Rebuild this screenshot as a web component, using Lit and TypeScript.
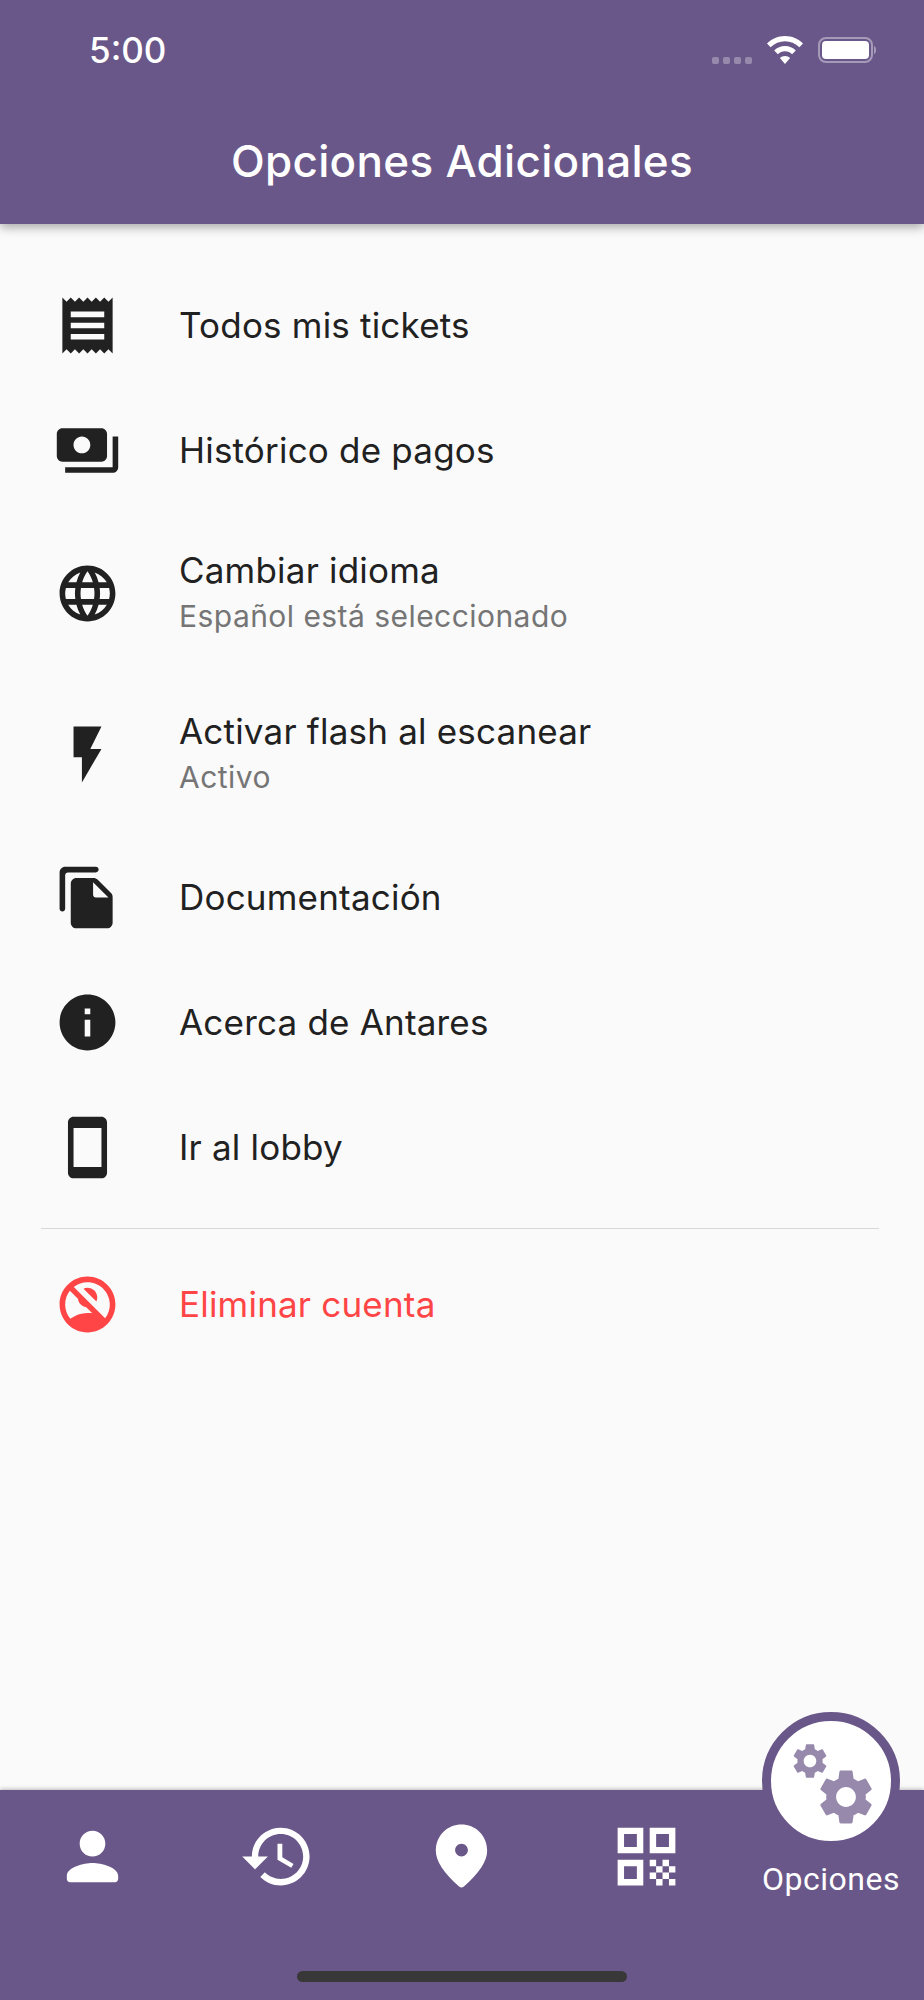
import { LitElement, css, html, svg } from 'lit';
import { customElement } from 'lit/decorators.js';

const ICONS = {
  receipt: 'M18 17H6v-2h12v2zm0-4H6v-2h12v2zm0-4H6V7h12v2zM3 22l1.5-1.5L6 22l1.5-1.5L9 22l1.5-1.5L12 22l1.5-1.5L15 22l1.5-1.5L18 22l1.5-1.5L21 22V2l-1.5 1.5L18 2l-1.5 1.5L15 2l-1.5 1.5L12 2l-1.5 1.5L9 2 7.5 3.5 6 2 4.5 3.5 3 2v20z',
  payments: 'M19 14V6c0-1.1-.9-2-2-2H3c-1.1 0-2 .9-2 2v8c0 1.1.9 2 2 2h14c1.1 0 2-.9 2-2zm-9-1c-1.66 0-3-1.34-3-3s1.34-3 3-3 3 1.34 3 3-1.34 3-3 3zm13-6v11c0 1.1-.9 2-2 2H4v-2h17V7h2z',
  language: 'M11.99 2C6.47 2 2 6.48 2 12s4.47 10 9.99 10C17.52 22 22 17.52 22 12S17.52 2 11.99 2zm6.93 6h-2.95c-.32-1.25-.78-2.45-1.38-3.56 1.84.63 3.37 1.91 4.33 3.56zM12 4.04c.83 1.2 1.48 2.53 1.91 3.96h-3.82c.43-1.43 1.08-2.76 1.91-3.96zM4.26 14C4.1 13.36 4 12.69 4 12s.1-1.36.26-2h3.38c-.08.66-.14 1.32-.14 2 0 .68.06 1.34.14 2H4.26zm.82 2h2.95c.32 1.25.78 2.45 1.38 3.56-1.84-.63-3.37-1.9-4.33-3.56zm2.95-8H5.08c.96-1.66 2.49-2.93 4.33-3.56C8.81 5.55 8.35 6.75 8.03 8zM12 19.96c-.83-1.2-1.48-2.53-1.91-3.96h3.82c-.43 1.43-1.08 2.76-1.91 3.96zM14.34 14H9.66c-.09-.66-.16-1.32-.16-2 0-.68.07-1.35.16-2h4.68c.09.65.16 1.32.16 2 0 .68-.07 1.34-.16 2zm.25 5.56c.6-1.11 1.06-2.31 1.38-3.56h2.95c-.96 1.65-2.49 2.93-4.33 3.56zM16.36 14c.08-.66.14-1.32.14-2 0-.68-.06-1.34-.14-2h3.38c.16.64.26 1.31.26 2s-.1 1.36-.26 2h-3.38z',
  flash: 'M7 2v11h3v9l7-12h-4l4-8z',
  file: 'M15 1H4c-1.1 0-2 .9-2 2v13c0 .55.45 1 1 1s1-.45 1-1V4c0-.55.45-1 1-1h10c.55 0 1-.45 1-1s-.45-1-1-1zm.59 4.59 4.83 4.83c.37.37.58.88.58 1.41V21c0 1.1-.9 2-2 2H7.99C6.89 23 6 22.1 6 21l.01-14c0-1.1.89-2 1.99-2h6.17c.53 0 1.04.21 1.42.59zM15 12h4.5L14 6.5V11c0 .55.45 1 1 1z',
  info: 'M12 2C6.48 2 2 6.48 2 12s4.48 10 10 10 10-4.48 10-10S17.52 2 12 2zm1 15h-2v-6h2v6zm0-8h-2V7h2v2z',
  phone: 'M17 1.01 7 1c-1.1 0-2 .9-2 2v18c0 1.1.9 2 2 2h10c1.1 0 2-.9 2-2V3c0-1.1-.9-1.99-2-1.99zM17 19H7V5h10v14z',
  noAccount: 'M15.18 10.94c.2-.44.32-.92.32-1.44C15.5 7.57 13.93 6 12 6c-.52 0-1 .12-1.44.32l4.62 4.62zM12 2C6.48 2 2 6.48 2 12s4.48 10 10 10 10-4.48 10-10S17.52 2 12 2zM4 12c0-1.85.63-3.55 1.69-4.9l2.86 2.86c.21 1.56 1.43 2.79 2.99 2.99l2.2 2.2C14.17 15.05 13.1 15 12 15c-2.32 0-4.45.8-6.14 2.12C4.7 15.73 4 13.95 4 12zm14.31 4.9L7.1 5.69C8.45 4.63 10.15 4 12 4c4.42 0 8 3.58 8 8 0 1.85-.63 3.54-1.69 4.9z',
  person: 'M12 12c2.21 0 4-1.79 4-4s-1.79-4-4-4-4 1.79-4 4 1.79 4 4 4zm0 2c-2.67 0-8 1.34-8 4v1c0 .55.45 1 1 1h14c.55 0 1-.45 1-1v-1c0-2.66-5.33-4-8-4z',
  history: 'M13 3c-4.97 0-9 4.03-9 9H1l3.89 3.89.07.14L9 12H6c0-3.87 3.13-7 7-7s7 3.13 7 7-3.13 7-7 7c-1.93 0-3.68-.79-4.94-2.06l-1.42 1.42C8.27 19.99 10.51 21 13 21c4.97 0 9-4.03 9-9s-4.03-9-9-9zm-1 5v5l4.28 2.54.72-1.21-3.5-2.08V8H12z',
  place: 'M12 2c-4.2 0-8 3.22-8 8.2 0 3.18 2.45 6.92 7.34 11.23.38.33.95.33 1.33 0C17.55 17.12 20 13.38 20 10.2 20 5.22 16.2 2 12 2zm0 10c-1.1 0-2-.9-2-2s.9-2 2-2 2 .9 2 2-.9 2-2 2z',
  qr: 'M3 11h8V3H3v8zm2-6h4v4H5V5zM3 21h8v-8H3v8zm2-6h4v4H5v-4zM13 3v8h8V3h-8zm6 6h-4V5h4v4zM21 19h-2v2h2v-2zM15 13h-2v2h2v-2zM17 15h-2v2h2v-2zM15 17h-2v2h2v-2zM17 19h-2v2h2v-2zM19 17h-2v2h2v-2zM19 13h-2v2h2v-2zM21 15h-2v2h2v-2z',
  gear: 'M19.14 12.94c.04-.3.06-.61.06-.94 0-.32-.02-.64-.07-.94l2.03-1.58c.18-.14.23-.41.12-.61l-1.92-3.32c-.12-.22-.37-.29-.59-.22l-2.39.96c-.5-.38-1.03-.7-1.62-.94l-.36-2.54c-.04-.24-.24-.41-.48-.41h-3.84c-.24 0-.43.17-.47.41l-.36 2.54c-.59.24-1.13.57-1.62.94l-2.39-.96c-.22-.08-.47 0-.59.22L2.74 8.87c-.12.21-.08.47.12.61l2.03 1.58c-.05.3-.09.63-.09.94s.02.64.07.94l-2.03 1.58c-.18.14-.23.41-.12.61l1.92 3.32c.12.22.37.29.59.22l2.39-.96c.5.38 1.03.7 1.62.94l.36 2.54c.05.24.24.41.48.41h3.84c.24 0 .44-.17.47-.41l.36-2.54c.59-.24 1.13-.56 1.62-.94l2.39.96c.22.08.47 0 .59-.22l1.92-3.32c.12-.22.07-.47-.12-.61l-2.01-1.58zM12 15.6c-1.98 0-3.6-1.62-3.6-3.6s1.62-3.6 3.6-3.6 3.6 1.62 3.6 3.6-1.62 3.6-3.6 3.6z',
};

type IconName = keyof typeof ICONS;

const icon = (name: IconName, cls = '') => html`
  <svg class="icon ${cls}" viewBox="0 0 24 24" fill="currentColor" fill-rule="evenodd">
    ${svg`<path d=${ICONS[name]}></path>`}
  </svg>
`;

const OPTIONS: { icon: IconName; title: string; sub?: string }[] = [
  { icon: 'receipt', title: 'Todos mis tickets' },
  { icon: 'payments', title: 'Histórico de pagos' },
  { icon: 'language', title: 'Cambiar idioma', sub: 'Español está seleccionado' },
  { icon: 'flash', title: 'Activar flash al escanear', sub: 'Activo' },
  { icon: 'file', title: 'Documentación' },
  { icon: 'info', title: 'Acerca de Antares' },
  { icon: 'phone', title: 'Ir al lobby' },
];

@customElement('app-root')
export class AppRoot extends LitElement {
  static override styles = css`
    :host {
      display: flex;
      flex-direction: column;
      width: 924px;
      height: 2000px;
      overflow: hidden;
      background: #fafafa;
      font-family: 'Inter', sans-serif;
      color: #212121;
    }

    .header {
      height: 224px;
      flex: none;
      display: flex;
      flex-direction: column;
      background: #6a5789;
      color: #fff;
      box-shadow: 0 3px 10px rgba(0, 0, 0, 0.35);
      position: relative;
      z-index: 1;
    }

    .status {
      height: 100px;
      display: flex;
      align-items: center;
      padding: 0 48px 0 89px;
    }

    .time {
      font-size: 35px;
      font-weight: 500;
      flex: 1;
    }

    .dots {
      display: flex;
      gap: 4px;
      margin: 20px 15px 0 0;
    }

    .dots span {
      width: 7px;
      height: 7px;
      border-radius: 2px;
      background: rgba(255, 255, 255, 0.3);
    }

    .wifi {
      width: 36px;
      height: 28px;
      margin-right: 15px;
    }

    .battery {
      width: 58px;
      height: 26px;
    }

    .title {
      text-align: center;
      font-size: 44px;
      font-weight: 500;
      letter-spacing: 0.3px;
      line-height: 50px;
      margin-top: 36px;
    }

    .list {
      flex: 1;
      padding-top: 40px;
    }

    .row {
      display: flex;
      align-items: center;
      height: 125px;
      padding-left: 54px;
    }

    .row.two {
      height: 161px;
    }

    .row .icon {
      width: 67px;
      height: 67px;
      flex: none;
      margin-top: -3px;
    }

    .text {
      margin-left: 58px;
      margin-top: -4px;
    }

    .name {
      font-size: 35px;
      letter-spacing: 0.2px;
      line-height: 46px;
    }

    .sub {
      font-size: 30px;
      letter-spacing: 0.45px;
      line-height: 44px;
      margin-top: 1px;
      color: #757575;
    }

    .divider {
      height: 1px;
      background: #d8d8d8;
      margin: 17px 45px 0 41px;
    }

    .danger {
      color: #ff4545;
      margin-top: 14px;
    }

    .nav {
      height: 210px;
      flex: none;
      position: relative;
      display: grid;
      grid-template-columns: repeat(5, 1fr);
      background: #6a5789;
      color: #fff;
      box-shadow: 0 -1px 4px rgba(0, 0, 0, 0.25);
    }

    .tab {
      display: flex;
      justify-content: center;
      padding-top: 28px;
    }

    .tab .icon {
      width: 77px;
      height: 77px;
    }

    .fab {
      position: absolute;
      left: 762px;
      top: -78px;
      width: 138px;
      height: 138px;
      box-sizing: border-box;
      border: 9px solid #6a5789;
      border-radius: 50%;
      background: #fff;
      color: #9689ac;
    }

    .fab .icon {
      position: absolute;
    }

    .gear-big {
      left: 42px;
      top: 43px;
      width: 66px;
      height: 66px;
    }

    .gear-small {
      left: 18px;
      top: 19px;
      width: 42px;
      height: 42px;
    }

    .label {
      position: absolute;
      left: 752px;
      width: 158px;
      top: 67px;
      text-align: center;
      font-family: 'Roboto', sans-serif;
      font-size: 32px;
      line-height: 44px;
      letter-spacing: 0.5px;
    }

    .home {
      position: absolute;
      left: 297px;
      top: 181px;
      width: 330px;
      height: 11px;
      border-radius: 6px;
      background: #383838;
    }
  `;

  private renderRow(o: (typeof OPTIONS)[number]) {
    return html`
      <div class="row ${o.sub ? 'two' : ''}">
        ${icon(o.icon)}
        <div class="text">
          <div class="name">${o.title}</div>
          ${o.sub ? html`<div class="sub">${o.sub}</div>` : ''}
        </div>
      </div>
    `;
  }

  override render() {
    return html`
      <div class="header">
        <div class="status">
          <span class="time">5:00</span>
          <div class="dots"><span></span><span></span><span></span><span></span></div>
          <svg class="wifi" viewBox="0 0 36 28" fill="#fff">
            <path d="M18 0C11 0 5 2.700 0 7.400l3.600 3.800C7.600 7.500 12.500 5.300 18 5.300s10.400 2.200 14.400 5.900L36 7.400C31 2.700 25 0 18 0z"></path>
            <path d="M18 10c-4.200 0-8 1.700-10.800 4.400l3.700 3.800c1.800-1.800 4.300-2.900 7.100-2.900s5.300 1.100 7.100 2.900l3.700-3.800C26 11.700 22.200 10 18 10z"></path>
            <path d="M18 20c-2 0-3.800.8-5.100 2.100L18 28l5.100-5.900C21.800 20.800 20 20 18 20z"></path>
          </svg>
          <svg class="battery" viewBox="0 0 58 26">
            <rect x="1" y="1" width="53" height="24" rx="7" fill="none" stroke="#fff" stroke-opacity="0.4" stroke-width="2"></rect>
            <rect x="4" y="4" width="47" height="18" rx="4" fill="#fff"></rect>
            <path d="M56 9c1.500.5 2 2 2 4s-.5 3.500-2 4z" fill="#fff" fill-opacity="0.4"></path>
          </svg>
        </div>
        <div class="title">Opciones Adicionales</div>
      </div>

      <div class="list">
        ${OPTIONS.map((o) => this.renderRow(o))}
        <div class="divider"></div>
        <div class="row danger">
          ${icon('noAccount')}
          <div class="text"><div class="name">Eliminar cuenta</div></div>
        </div>
      </div>

      <div class="nav">
        <div class="tab">${icon('person')}</div>
        <div class="tab">${icon('history')}</div>
        <div class="tab">${icon('place')}</div>
        <div class="tab">${icon('qr')}</div>
        <div class="tab"></div>
        <div class="fab">${icon('gear', 'gear-small')}${icon('gear', 'gear-big')}</div>
        <div class="label">Opciones</div>
        <div class="home"></div>
      </div>
    `;
  }
}

declare global {
  interface HTMLElementTagNameMap {
    'app-root': AppRoot;
  }
}
